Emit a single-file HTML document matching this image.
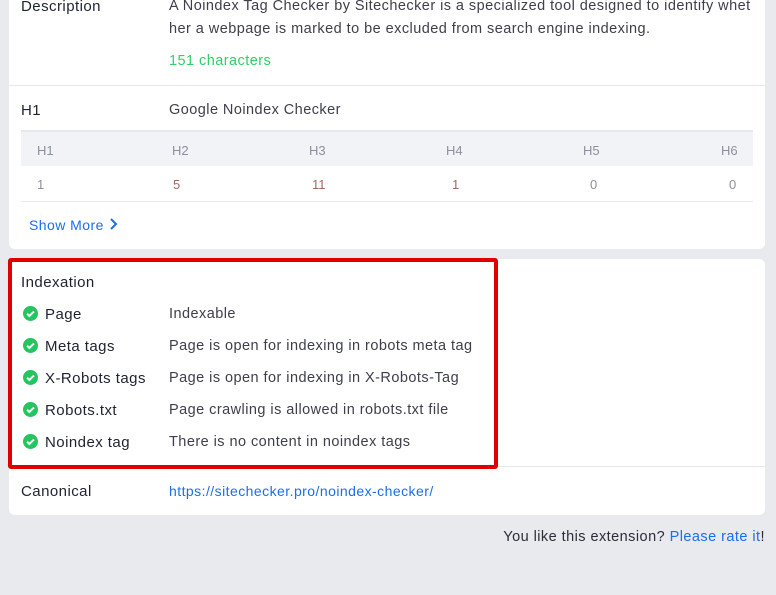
<!DOCTYPE html>
<html><head><meta charset="utf-8"><style>
*{margin:0;padding:0;box-sizing:border-box}
body{width:776px;height:595px;background:#e8eaee;font-family:"Liberation Sans",sans-serif;position:relative;overflow:hidden;color:#1f2233}
.card{position:absolute;background:#fff;border-radius:6px}
.t{position:absolute;white-space:nowrap;font-size:14.5px;letter-spacing:0.45px}
.l{color:#1f2233;font-size:15px}
.v{color:#3d3f4a}
.th{position:absolute;font-size:13px;color:#8b90a0}
.td{position:absolute;font-size:13px;color:#8b90a0}
.r{color:#a06a64}
.chk{position:absolute;width:15px;height:15px;border-radius:50%;background:#22c55e}
.chk svg{position:absolute;left:0;top:0}
</style></head><body>
<div class="card" style="left:9px;top:-10px;width:756px;height:259px"></div>
<div class="t l" style="left:21px;top:-2px">Description</div>
<div class="t v" style="left:169px;top:-2px">A Noindex Tag Checker by Sitechecker is a specialized tool designed to identify whet</div>
<div class="t v" style="left:169px;top:21px">her a webpage is marked to be excluded from search engine indexing.</div>
<div class="t" style="left:169px;top:53px;color:#2fcf6a">151 characters</div>
<div style="position:absolute;left:9px;top:85px;width:756px;height:1px;background:#e7e8ec"></div>
<div class="t l" style="left:21px;top:102px">H1</div>
<div class="t v" style="left:169px;top:102px">Google Noindex Checker</div>
<div style="position:absolute;left:21px;top:130px;width:732px;height:36px;background:#f2f3f6;border-top:2px solid #e6e8ed"></div>
<div class="th" style="left:37px;top:143px">H1</div>
<div class="th" style="left:172px;top:143px">H2</div>
<div class="th" style="left:309px;top:143px">H3</div>
<div class="th" style="left:446px;top:143px">H4</div>
<div class="th" style="left:583px;top:143px">H5</div>
<div class="th" style="left:721px;top:143px">H6</div>
<div class="td" style="left:37px;top:177px">1</div>
<div class="td r" style="left:173px;top:177px">5</div>
<div class="td r" style="left:312px;top:177px">11</div>
<div class="td r" style="left:452px;top:177px">1</div>
<div class="td" style="left:590px;top:177px">0</div>
<div class="td" style="left:729px;top:177px">0</div>
<div style="position:absolute;left:21px;top:201px;width:732px;height:1px;background:#e6e8ed"></div>
<div class="t" style="left:29px;top:217px;color:#1a6ef0;font-size:14px">Show More</div>
<svg style="position:absolute;left:108px;top:217px" width="10" height="14" viewBox="0 0 10 14"><path d="M3 2l5 5-5 5" stroke="#1a6ef0" stroke-width="2" fill="none"/></svg>

<div class="card" style="left:9px;top:259px;width:756px;height:256px"></div>
<div style="position:absolute;left:9px;top:466px;width:756px;height:1px;background:#e7e8ec"></div>
<div style="position:absolute;left:8px;top:258px;width:490px;height:211px;border:4px solid #e00000;border-radius:3px"></div>
<div class="t l" style="left:21px;top:274px">Indexation</div>
<div class="chk" style="left:23px;top:306px"><svg width="15" height="15"><path d="M4 7.7l2.4 2.3 4.6-4.6" stroke="#fff" stroke-width="2" fill="none"/></svg></div>
<div class="t l" style="left:45px;top:306px">Page</div>
<div class="t v" style="left:169px;top:306px">Indexable</div>
<div class="chk" style="left:23px;top:338px"><svg width="15" height="15"><path d="M4 7.7l2.4 2.3 4.6-4.6" stroke="#fff" stroke-width="2" fill="none"/></svg></div>
<div class="t l" style="left:45px;top:338px">Meta tags</div>
<div class="t v" style="left:169px;top:338px">Page is open for indexing in robots meta tag</div>
<div class="chk" style="left:23px;top:370px"><svg width="15" height="15"><path d="M4 7.7l2.4 2.3 4.6-4.6" stroke="#fff" stroke-width="2" fill="none"/></svg></div>
<div class="t l" style="left:45px;top:370px">X-Robots tags</div>
<div class="t v" style="left:169px;top:370px">Page is open for indexing in X-Robots-Tag</div>
<div class="chk" style="left:23px;top:402px"><svg width="15" height="15"><path d="M4 7.7l2.4 2.3 4.6-4.6" stroke="#fff" stroke-width="2" fill="none"/></svg></div>
<div class="t l" style="left:45px;top:402px">Robots.txt</div>
<div class="t v" style="left:169px;top:402px">Page crawling is allowed in robots.txt file</div>
<div class="chk" style="left:23px;top:434px"><svg width="15" height="15"><path d="M4 7.7l2.4 2.3 4.6-4.6" stroke="#fff" stroke-width="2" fill="none"/></svg></div>
<div class="t l" style="left:45px;top:434px">Noindex tag</div>
<div class="t v" style="left:169px;top:434px">There is no content in noindex tags</div>
<div class="t l" style="left:21px;top:483px">Canonical</div>
<div class="t" style="left:169px;top:483px;color:#1a6ef0;font-size:14px">https://sitechecker.pro/noindex-checker/</div>
<div class="t" style="right:11px;top:529px;color:#2b2d38">You like this extension? <span style="color:#1a6ef0">Please rate it</span>!</div>
</body></html>
